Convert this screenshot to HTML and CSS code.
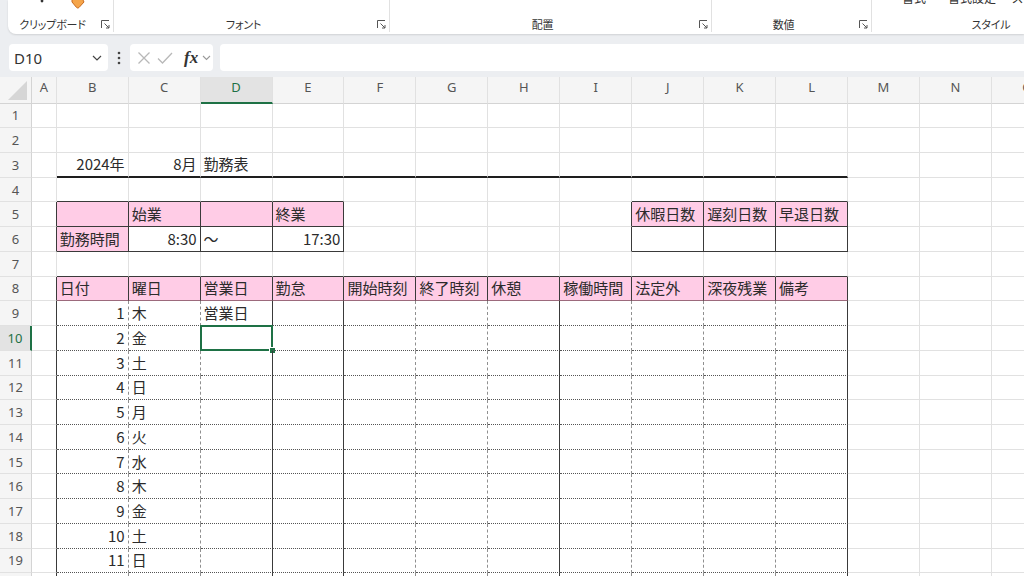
FILE: index.html
```html
<!DOCTYPE html>
<html lang="ja">
<head>
<meta charset="UTF-8">
<meta name="viewport" content="width=device-width, initial-scale=1.0">
<title>勤務表 - Excel</title>
<link rel="stylesheet" href="styles.css">
</head>
<body>
<div class="ribbon">
    <div class="group g-clip">
        <div class="group-top">
            <svg class="paste-bit" width="6" height="6" viewBox="0 0 6 6"><circle cx="3" cy="1" r="1.4" fill="#333"/></svg>
            <svg class="brush" width="16" height="10" viewBox="0 0 16 10"><path d="M2 -2l10 0 2 4-5 5.5c-1 .8-2 .6-2.6-.2L2 2z" fill="#f5a54a" stroke="#c8691e" stroke-width="1"/></svg>
        </div>
        <div class="group-label-row">
            <div class="group-label">クリップボード</div>
            <div class="launcher"><svg width="9" height="9" viewBox="0 0 9 9"><path d="M.5 8V.5H8M3.5 3.5l4.5 4.5M8 5v3H5" fill="none" stroke="#555"/></svg></div>
        </div>
    </div>
    <div class="group g-font">
        <div class="group-top"></div>
        <div class="group-label-row">
            <div class="group-label">フォント</div>
            <div class="launcher"><svg width="9" height="9" viewBox="0 0 9 9"><path d="M.5 8V.5H8M3.5 3.5l4.5 4.5M8 5v3H5" fill="none" stroke="#555"/></svg></div>
        </div>
    </div>
    <div class="group g-align">
        <div class="group-top"></div>
        <div class="group-label-row">
            <div class="group-label">配置</div>
            <div class="launcher"><svg width="9" height="9" viewBox="0 0 9 9"><path d="M.5 8V.5H8M3.5 3.5l4.5 4.5M8 5v3H5" fill="none" stroke="#555"/></svg></div>
        </div>
    </div>
    <div class="group g-num">
        <div class="group-top"></div>
        <div class="group-label-row">
            <div class="group-label">数値</div>
            <div class="launcher"><svg width="9" height="9" viewBox="0 0 9 9"><path d="M.5 8V.5H8M3.5 3.5l4.5 4.5M8 5v3H5" fill="none" stroke="#555"/></svg></div>
        </div>
    </div>
    <div class="group g-style">
        <div class="group-top">
            <span class="cut cut-1">書式</span>
            <span class="cut cut-2">書式設定</span>
            <span class="cut cut-3">スタイル</span>
        </div>
        <div class="group-label-row">
            <div class="group-label">スタイル</div>
        </div>
    </div>
</div>

<div class="formula-bar">
    <div class="name-box">
        <span>D10</span>
        <svg width="10" height="6" viewBox="0 0 10 6"><path d="M1 1l4 4 4-4" fill="none" stroke="#444" stroke-width="1.2"/></svg>
    </div>
    <div class="more">
        <svg width="4" height="14" viewBox="0 0 4 14"><circle cx="2" cy="2" r="1.3" fill="#444"/><circle cx="2" cy="7" r="1.3" fill="#444"/><circle cx="2" cy="12" r="1.3" fill="#444"/></svg>
    </div>
    <div class="fx-box">
        <svg class="fx-cancel" width="14" height="14" viewBox="0 0 14 14"><path d="M1.5 1.5l11 11M12.5 1.5l-11 11" stroke="#b8b8b8" stroke-width="1.3"/></svg>
        <svg class="fx-enter" width="16" height="14" viewBox="0 0 16 14"><path d="M1 7.5l4.5 4.5L15 2" fill="none" stroke="#b8b8b8" stroke-width="1.3"/></svg>
        <span class="fx">fx</span>
        <svg class="fx-chev" width="9" height="6" viewBox="0 0 9 6"><path d="M1 1l3.5 3.5L8 1" fill="none" stroke="#999" stroke-width="1.1"/></svg>
    </div>
    <div class="formula-input"></div>
</div>

<div class="sheet" id="sheet"></div>

<script>
const COLS = 'ABCDEFGHIJKLMNO'.split('');
const ROWS = 20;
const cells = {};

function build() {
    const sheet = document.getElementById('sheet');
    const corner = document.createElement('div');
    corner.className = 'corner';
    corner.innerHTML = '<svg width="20" height="19" viewBox="0 0 20 19"><path d="M19 0V19H0z" fill="#d6d6d6"/></svg>';
    sheet.appendChild(corner);

    COLS.forEach(c => {
        const h = document.createElement('div');
        h.className = 'col-head' + (c === 'D' ? ' active' : '');
        h.textContent = c;
        sheet.appendChild(h);
    });

    for (let r = 1; r <= ROWS; r++) {
        const rh = document.createElement('div');
        rh.className = 'row-head' + (r === 10 ? ' active' : '');
        rh.textContent = r;
        sheet.appendChild(rh);
        COLS.forEach(c => {
            const cell = document.createElement('div');
            cell.className = 'cell';
            cells[c + r] = cell;
            sheet.appendChild(cell);
        });
    }
}

function add(c1, r1, c2, r2, ...cls) {
    for (let r = r1; r <= r2; r++) {
        for (let i = COLS.indexOf(c1); i <= COLS.indexOf(c2); i++) {
            cells[COLS[i] + r].classList.add(...cls);
        }
    }
}

function put(ref, text, align) {
    cells[ref].textContent = text;
    if (align) cells[ref].classList.add(align);
}

build();

// title row
put('B3', '2024年', 'right');
put('C3', '8月', 'right');
put('D3', '勤務表');
add('B', 3, 'L', 3, 'b-thick');

// working hours box
add('B', 4, 'E', 4, 'b-solid');
add('A', 5, 'A', 6, 'r-solid');
add('B', 5, 'E', 6, 'b-solid', 'r-solid');
add('B', 5, 'E', 5, 'pink');
add('B', 6, 'B', 6, 'pink');
put('C5', '始業');
put('E5', '終業');
put('B6', '勤務時間');
put('C6', '8:30', 'right');
put('D6', '～');
put('E6', '17:30', 'right');

// summary box
add('J', 4, 'L', 4, 'b-solid');
add('I', 5, 'I', 6, 'r-solid');
add('J', 5, 'L', 6, 'b-solid', 'r-solid');
add('J', 5, 'L', 5, 'pink');
put('J5', '休暇日数');
put('K5', '遅刻日数');
put('L5', '早退日数');

// main table header
add('B', 7, 'L', 7, 'b-solid');
add('A', 8, 'A', ROWS, 'r-solid');
add('B', 8, 'L', 8, 'pink', 'r-solid', 'b-pink');
['日付', '曜日', '営業日', '勤怠', '開始時刻', '終了時刻', '休憩', '稼働時間', '法定外', '深夜残業', '備考']
    .forEach((t, i) => put(COLS[i + 1] + 8, t));

// day rows
add('B', 9, 'L', ROWS, 'b-dot');
const solidCols = ['D', 'E', 'H', 'L'];
'BCDEFGHIJKL'.split('').forEach(c => {
    add(c, 9, c, ROWS, solidCols.includes(c) ? 'r-solid' : 'r-dash');
});
const week = ['木', '金', '土', '日', '月', '火', '水'];
for (let d = 1; d <= ROWS - 8; d++) {
    put('B' + (d + 8), d, 'right');
    put('C' + (d + 8), week[(d - 1) % 7]);
}
put('D9', '営業日');

// active cell
const sel = document.createElement('div');
sel.className = 'selection';
sel.innerHTML = '<span class="handle"></span>';
cells['D10'].appendChild(sel);
</script>
</body>
</html>
```

FILE: styles.css
```css
body {
    margin: 0;
    width: 1024px;
    height: 576px;
    overflow: hidden;
    background: #eceef1;
    font-family: "Noto Sans", "Noto Sans CJK JP", sans-serif;
    color: #222;
}

/* ribbon */
.ribbon {
    height: 34px;
    margin-left: 8px;
    background: #fff;
    border-bottom-left-radius: 8px;
    box-shadow: 0 1px 2px rgba(0,0,0,0.12);
    display: flex;
    overflow: hidden;
}
.group {
    height: 32px;
    flex-shrink: 0;
    box-sizing: border-box;
    border-right: 1px solid #e1e1e1;
    display: flex;
    flex-direction: column;
}
.group-top { height: 16px; display: flex; overflow: hidden; }
.group-label-row { height: 16px; display: flex; align-items: center; }
.group-label {
    flex: 1;
    text-align: center;
    font-family: "Noto Sans CJK JP", sans-serif;
    font-feature-settings: "palt";
    font-size: 11px;
    letter-spacing: -0.2px;
    line-height: 16px;
    color: #333;
}
.launcher { width: 16px; display: flex; justify-content: center; align-items: center; }
.g-clip { width: 106px; }
.g-font { width: 276px; }
.g-align { width: 322px; }
.g-num { width: 160px; }
.g-style { width: 238px; border-right: none; }
.paste-bit { margin-left: 31px; }
.brush { margin-left: 25px; }
.cut {
    font-family: "Noto Sans CJK JP", sans-serif;
    font-feature-settings: "palt";
    font-size: 12px;
    line-height: 16px;
    margin-top: -10px;
    color: #333;
    white-space: nowrap;
}
.cut-1 { margin-left: 30px; }
.cut-2 { margin-left: 22px; }
.cut-3 { margin-left: 16px; }

/* formula bar */
.formula-bar {
    height: 43px;
    box-sizing: border-box;
    padding: 10px 0 0 9px;
    display: flex;
    align-items: flex-start;
}
.name-box {
    width: 99px;
    height: 27px;
    box-sizing: border-box;
    padding: 0 6px 0 5px;
    background: #fff;
    border-radius: 4px;
    display: flex;
    align-items: center;
    justify-content: space-between;
    font-size: 15px;
    color: #333;
}
.more { width: 22px; height: 27px; display: flex; align-items: center; justify-content: center; }
.fx-box {
    width: 83px;
    height: 27px;
    box-sizing: border-box;
    padding-left: 7px;
    background: #fff;
    border-radius: 4px;
    display: flex;
    align-items: center;
}
.fx-enter { margin-left: 6px; }
.fx {
    margin-left: 11px;
    font-family: "Liberation Serif", serif;
    font-style: italic;
    font-weight: bold;
    font-size: 17px;
    color: #333;
}
.fx-chev { margin-left: 4px; }
.formula-input {
    flex: 1;
    height: 27px;
    margin-left: 7px;
    background: #fff;
    border-radius: 4px 0 0 4px;
}

/* sheet */
.sheet {
    width: 1024px;
    height: 499px;
    overflow: hidden;
    background: #fff;
    display: grid;
    grid-template-columns: 32px 24.7px repeat(14, 71.95px);
    grid-template-rows: 26.6px repeat(20, 24.72px);
}
.corner {
    background: #f5f5f5;
    border-right: 1px solid #d4d4d4;
    border-bottom: 1px solid #d4d4d4;
    box-sizing: border-box;
    display: flex;
    align-items: flex-end;
    justify-content: flex-end;
    padding: 0 3px 3px 0;
}
.col-head, .row-head {
    background: #f5f5f5;
    box-sizing: border-box;
    display: flex;
    align-items: center;
    justify-content: center;
    font-size: 13px;
    color: #555;
}
.col-head {
    border-right: 1px solid #e1e1e1;
    border-bottom: 1px solid #d4d4d4;
    padding-bottom: 5px;
}
.row-head {
    border-right: 1px solid #d4d4d4;
    border-bottom: 1px solid #e1e1e1;
}
.col-head.active {
    background: #e3e3e3;
    color: #1e7145;
    border-bottom: 2px solid #1e7145;
}
.row-head.active {
    background: #e3e3e3;
    color: #1e7145;
    border-right: 2px solid #1e7145;
}
.cell {
    position: relative;
    box-sizing: border-box;
    min-width: 0;
    padding: 0 3px;
    border-right: 1px solid #e1e1e1;
    border-bottom: 1px solid #e1e1e1;
    display: flex;
    align-items: center;
    font-family: "Noto Sans CJK JP", sans-serif;
    font-size: 15px;
    line-height: 18px;
    color: #2b2b2b;
    white-space: nowrap;
}
.cell.right { justify-content: flex-end; }
.cell.pink { background: #ffcce6; }
.cell.r-solid { border-right: 1px solid #3a3a3a; }
.cell.r-dash { border-right: 1px dashed #8f8f8f; }
.cell.b-solid { border-bottom: 1px solid #3a3a3a; }
.cell.b-dot { border-bottom: 1px dotted #555; }
.cell.b-pink { border-bottom: 1px solid #9c6a7c; }
.cell.b-thick { border-bottom: 2px solid #1e1e1e; }

.selection {
    position: absolute;
    left: -1px;
    top: -1px;
    right: -1px;
    bottom: -1px;
    border: 2px solid #1e7145;
}
.handle {
    position: absolute;
    right: -5px;
    bottom: -5px;
    width: 5px;
    height: 5px;
    background: #1e7145;
    border: 1px solid #fff;
}
```
